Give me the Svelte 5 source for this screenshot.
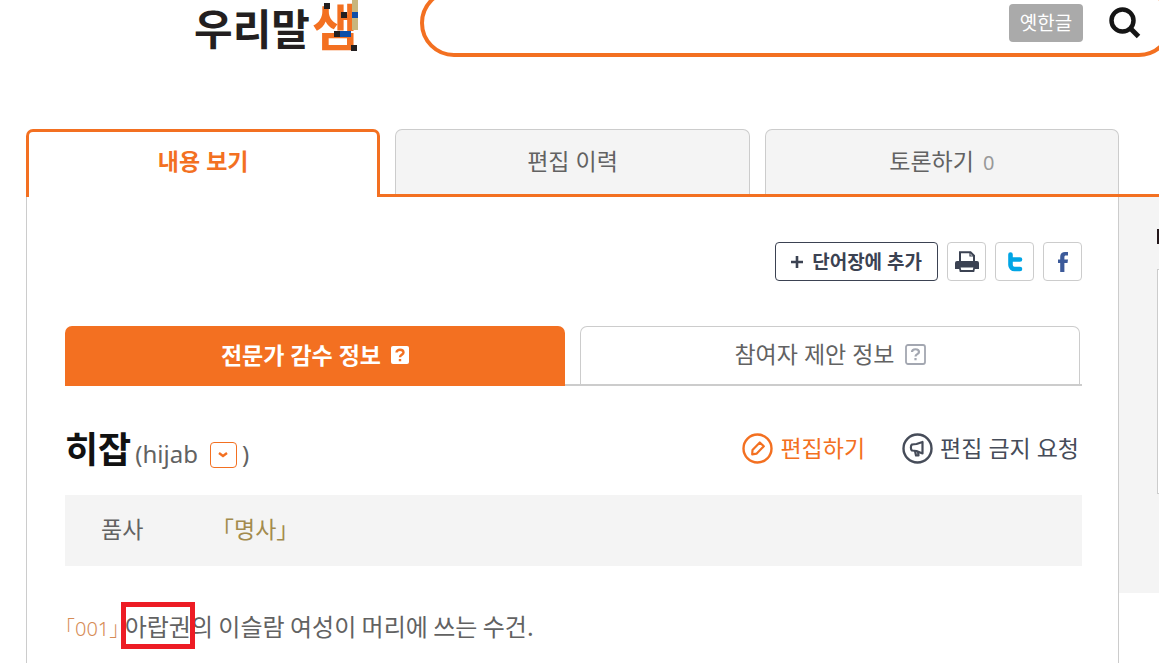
<script>
  let query = $state('');
</script>

<div class="page">
  <header>
    <a class="logo" href="#home" aria-label="우리말샘">
      <span class="name">우리말</span>
      <span class="mark">샘
        <svg viewBox="0 0 48 54" aria-hidden="true">
          <path fill="#c8b67c" d="M40 0h6v30h-6z" />
          <path fill="#231f20" d="M12 3h6v6h-6zM29 12h6v6h-6zM22 31h6v6h-6zM39 45h6v6h-6z" />
          <path fill="#0e4ea8" d="M40 12h6v6h-6zM28 31h11v6H28z" />
        </svg>
      </span>
    </a>
    <form class="search" onsubmit={(e) => e.preventDefault()}>
      <input type="text" aria-label="검색어" bind:value={query} />
      <button type="button" class="old">옛한글</button>
      <button type="submit" class="go" aria-label="검색">
        <svg width="32" height="32" viewBox="0 0 32 32" fill="none" stroke="#151515">
          <circle cx="13.500" cy="13.500" r="11" stroke-width="4.500" />
          <path d="M21.500 21.500l8 8" stroke-width="5" />
        </svg>
      </button>
    </form>
  </header>

  <nav class="tabs">
    <a class="tab active" href="#view">내용 보기</a>
    <a class="tab" href="#history">편집 이력</a>
    <a class="tab" href="#talk">토론하기 <span class="count">0</span></a>
  </nav>

  <div class="columns">
    <main>
      <div class="tools">
        <button class="add">
          <svg width="12" height="12" viewBox="0 0 12 12" stroke="#3b4252" stroke-width="2.600"><path d="M6 0v12M0 6h12" /></svg>
          단어장에 추가
        </button>
        <button class="tool" aria-label="인쇄">
          <svg width="24" height="22" viewBox="0 0 24 22">
            <path d="M5 11V1.200h10.500l3.500 3.500V11" fill="#fff" stroke="#3b4252" stroke-width="2" />
            <path d="M15 1v4h4" fill="none" stroke="#3b4252" stroke-width="1.200" />
            <path d="M2 10h20a2 2 0 0 1 2 2v6h-4v-3H4v3H0v-6a2 2 0 0 1 2-2z" fill="#3b4252" />
            <path d="M4.500 15.500h15L18.500 20h-13z" fill="#fff" stroke="#3b4252" stroke-width="1.800" />
          </svg>
        </button>
        <button class="tool" aria-label="트위터">
          <svg width="16" height="20" viewBox="0 0 16 20" fill="none" stroke="#00a5e5" stroke-width="4.600" stroke-linecap="round" stroke-linejoin="round">
            <path d="M3.500 2.500v10.500a4 4 0 0 0 4 4H13M3.500 7.500H13" />
          </svg>
        </button>
        <button class="tool" aria-label="페이스북">
          <svg width="10" height="20" viewBox="0 0 10 20" fill="#3c5a9a">
            <path d="M2.200 20v-9H0V7.500h2.200V5C2.200 1.700 4 0 7 0h3v3.600H8c-1.200 0-1.600.5-1.600 1.600v2.300H10L9.500 11H6.400v9z" />
          </svg>
        </button>
      </div>

      <div class="subtabs">
        <a class="sub on" href="#expert">전문가 감수 정보
          <svg width="18" height="18" viewBox="0 0 18 18"><rect width="18" height="18" rx="2" fill="#fff" /><path d="M5.500 6.500C5.500 2.800 12.500 2.800 12.500 6.500 12.500 8.800 9 8.500 9 11.300M9 13v2.300" fill="none" stroke="#f37021" stroke-width="2.400" /></svg>
        </a>
        <a class="sub" href="#open">참여자 제안 정보
          <svg width="21" height="21" viewBox="0 0 21 21"><rect x="1" y="1" width="19" height="19" rx="2" fill="#fff" stroke="#a3a7b1" stroke-width="1.800" /><path d="M7 8C7 4.300 14 4.300 14 8c0 2.300-3.500 2-3.500 4.500M10.500 14v2.200" fill="none" stroke="#a3a7b1" stroke-width="2.200" /></svg>
        </a>
      </div>

      <div class="entry">
        <h1>히잡</h1>
        <span class="origin">(hijab</span>
        <button class="more" aria-label="원어 정보">
          <svg width="10" height="6" viewBox="0 0 10 6"><path d="M1 1l4 3 4-3" fill="none" stroke="#f37021" stroke-width="2.400" /></svg>
        </button>
        <span class="origin">)</span>
        <div class="actions">
          <a class="edit" href="#edit">
            <svg width="31" height="31" viewBox="0 0 31 31" fill="none" stroke="currentColor" stroke-linejoin="round">
              <circle cx="15.500" cy="15.500" r="14" stroke-width="2.400" />
              <path d="M10.500 17l7.300-7.500 4 3.700-7.300 7.500-4.300.7z" stroke-width="2.200" />
            </svg>
            편집하기
          </a>
          <a href="#block">
            <svg width="31" height="31" viewBox="0 0 31 31" fill="none" stroke="currentColor" stroke-linejoin="round">
              <circle cx="15.500" cy="15.500" r="14" stroke-width="2.400" />
              <path d="M10 11.500l4.500-.5 6-2v11.500l-6-2.500-4.500-.5c-1.500-1-1.500-5 0-6zM13 18l1 4.500h2.500L16 18.500" stroke-width="2.200" />
            </svg>
            편집 금지 요청
          </a>
        </div>
      </div>

      <dl>
        <dt>품사</dt>
        <dd>「명사」</dd>
      </dl>

      <p class="sense"><span class="no">「001」</span> <span class="boxed">아랍권</span>의 이슬람 여성이 머리에 쓰는 수건.</p>
    </main>
    <aside>
      <div class="panel">
        <div class="bar"></div>
        <div class="card"></div>
      </div>
    </aside>
  </div>
</div>

<style>
  :global(body) { margin: 0; background: #fff; }
  .page {
    min-height: 100vh;
    max-height: 100vh;
    overflow: hidden;
    box-sizing: border-box;
    color: #626262;
    font-family: "Noto Sans", "Noto Sans CJK KR", sans-serif;
    font-size: 23px;
    line-height: 32px;
  }
  * { box-sizing: border-box; }
  a { color: inherit; text-decoration: none; }
  button { font: inherit; color: inherit; padding: 0; cursor: pointer; }
  svg { display: block; flex: none; }

  header { display: flex; height: 68px; margin: -11px -14px 72px 194px; }
  .logo { display: flex; flex: none; width: 226px; color: #231f20; font-weight: 700; }
  .name { font-size: 42px; line-height: 80px; }
  .mark { position: relative; margin-left: 2px; color: #f37021; font-size: 50px; line-height: 76px; height: 68px; }
  .mark svg { position: absolute; left: 0; top: 11px; width: 48px; height: 54px; }
  .search { flex: 1; display: flex; align-items: center; border: 4px solid #f37021; border-radius: 34px; padding-right: 28px; }
  .search input { flex: 1; min-width: 0; border: 0; outline: 0; background: none; margin-left: 30px; font: inherit; }
  .old { width: 74px; height: 38px; border: 0; border-radius: 4px; background: #aaa; color: #fff; font-size: 19px; line-height: 30px; margin-right: 26px; }
  .go { border: 0; background: none; }

  .tabs { display: grid; grid-template-columns: repeat(3, minmax(0, 1fr)); gap: 15px; margin-left: 26px; padding-right: 40px; border-bottom: 3px solid #f37021; }
  .tab { height: 65px; border: 1px solid #ccc; border-bottom: 0; border-radius: 7px 7px 0 0; background: #f4f4f4; text-align: center; line-height: 62px; }
  .tab.active { height: 68px; margin-bottom: -3px; border: 3px solid #f37021; border-bottom: 0; background: #fff; color: #f37021; font-weight: 700; line-height: 58px; }
  .count { color: #999; font-size: 20px; margin-left: 3px; }

  .columns { display: grid; grid-template-columns: minmax(0, 1fr) 40px; margin-left: 26px; }
  main { border: 1px solid #ccc; border-width: 0 1px; padding: 45px 36px 60px 38px; }
  .tools { display: flex; justify-content: flex-end; gap: 9px; }
  .tools button { display: flex; align-items: center; justify-content: center; height: 39px; border: 1px solid #ccc; border-radius: 4px; background: #fff; }
  .tools .tool { width: 39px; }
  .tools .add { gap: 9px; padding: 0 15px; border-color: #3b4252; color: #3b4252; font-size: 19px; font-weight: 700; }

  .subtabs { display: grid; grid-template-columns: repeat(2, minmax(0, 1fr)); gap: 15px; margin-top: 45px; padding-right: 2px; border-bottom: 2px solid #ccc; }
  .sub { display: flex; align-items: center; justify-content: center; gap: 10px; height: 58px; padding-bottom: 3px; border: 1px solid #ccc; border-bottom: 0; border-radius: 7px 7px 0 0; }
  .sub.on { height: 60px; margin-bottom: -2px; border: 0; background: #f37021; color: #fff; font-weight: 700; }

  .entry { display: flex; align-items: center; margin-top: 36px; height: 56px; }
  h1 { margin: 0 4px 0 0; color: #111; font-size: 36px; line-height: 56px; }
  .origin { font-size: 24px; padding-top: 8px; }
  .more { display: flex; align-items: center; justify-content: center; width: 27px; height: 26px; margin: 9px 5px 0 12px; border: 1px solid #f37021; border-radius: 4px; background: #fff; }
  .actions { display: flex; gap: 37px; margin-left: auto; padding: 0 3px 4px 0; color: #464c59; }
  .actions a { display: flex; align-items: center; gap: 7px; }
  .actions .edit { color: #f37021; }

  dl { display: flex; margin: 17px 0 0; padding: 0 36px; background: #f4f4f4; line-height: 69px; height: 71px; }
  dt { width: 110px; }
  dd { margin: 0; color: #a38b4d; }
  .sense { margin: 44px 0 0; font-family: "Noto Sans CJK KR", sans-serif; font-size: 24px; }
  .no { color: #d68b55; font-family: "Noto Sans", "Noto Sans CJK KR", sans-serif; font-size: 20px; font-weight: 300; font-feature-settings: "halt"; }
  .boxed { position: relative; }
  .boxed::after { content: ""; position: absolute; inset: -6px -4px; border: 5px solid #ed1c24; }

  .panel { height: 396px; padding: 32px 0 0 38px; background: #f4f4f4; }
  .bar { height: 15px; background: #24181b; margin-bottom: 25px; }
  .card { height: 225px; border: 1px solid #ccc; border-right: 0; background: #fff; }
</style>
